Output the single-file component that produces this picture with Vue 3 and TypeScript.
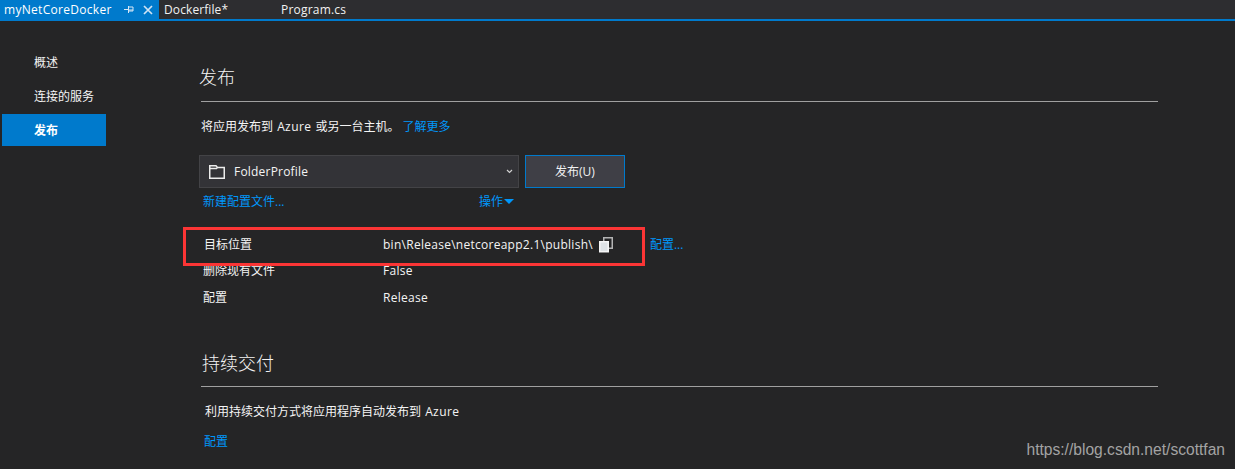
<script setup lang="ts">
const nav = [
  { label: '概述', active: false },
  { label: '连接的服务', active: false },
  { label: '发布', active: true },
]
const rows = [
  { key: '删除现有文件', value: 'False' },
  { key: '配置', value: 'Release' },
]
</script>

<template>
  <div class="page">
    <header class="tabs">
      <div class="tab active">
        <span class="tab-name">myNetCoreDocker</span>
        <svg class="pin" width="10" height="9" viewBox="0 0 10 9"><path d="M0 4.5H4M4.5 1V8M4.5 2H9V6H4.5M4.5 5H9" fill="none" stroke="#d6e6f5" stroke-width="1"/></svg>
        <svg class="close" width="10" height="10" viewBox="0 0 10 10"><path d="M1 1L9 9M9 1L1 9" fill="none" stroke="#d0e3f4" stroke-width="1.7"/></svg>
      </div>
      <div class="tab docker">Dockerfile*</div>
      <div class="tab program">Program.cs</div>
    </header>
    <div class="body">
      <nav class="side">
        <a v-for="n in nav" :key="n.label" class="nav-item" :class="{ on: n.active }">{{ n.label }}</a>
      </nav>
      <main class="main">
        <section class="publish">
          <h2 class="title first">发布</h2>
          <div class="rule"></div>
          <p class="desc">将应用发布到 <span class="lat">Azure</span> 或另一台主机。<a class="link learn">了解更多</a></p>
          <div class="controls">
            <div class="select">
              <svg class="folder" width="16" height="14" viewBox="0 0 16 14"><path d="M0.75 13.25V0.75H7L8.5 2.5H15.25V13.25ZM0.75 3.5H7.5L8.5 2.5" fill="none" stroke="#ececec" stroke-width="1.5"/></svg>
              <span class="select-text">FolderProfile</span>
              <svg class="chev" width="7" height="5" viewBox="0 0 7 5"><path d="M1 1L3.5 3.5L6 1" fill="none" stroke="#d0d0d0" stroke-width="1.2"/></svg>
            </div>
            <button class="btn">发布(U)</button>
          </div>
          <div class="actions">
            <a class="link">新建配置文件...</a>
            <a class="link ops">操作<span class="caret"></span></a>
          </div>
          <div class="props">
            <div class="prop target">
              <span class="k">目标位置</span>
              <span class="v">bin\Release\netcoreapp2.1\publish\</span>
              <svg class="copy" width="14" height="16" viewBox="0 0 14 16"><path d="M4.75 4V0.75H13.25V11.25H10" fill="none" stroke="#b4b4b4" stroke-width="1.5"/><rect x="0.75" y="4.75" width="8.5" height="10" fill="#dfe3e6" stroke="#f6f6f6" stroke-width="1.5"/><path d="M0 15.5H10" stroke="#8a8a8a"/></svg>
              <a class="link cfg">配置...</a>
            </div>
            <div v-for="r in rows" :key="r.key" class="prop">
              <span class="k">{{ r.key }}</span>
              <span class="v">{{ r.value }}</span>
            </div>
            <div class="redbox"></div>
          </div>
        </section>
        <section class="cd">
          <h2 class="title">持续交付</h2>
          <div class="rule"></div>
          <p class="desc cd-desc">利用持续交付方式将应用程序自动发布到 <span class="lat">Azure</span></p>
          <a class="link cd-link">配置</a>
        </section>
      </main>
    </div>
    <div class="mark">https://blog.csdn.net/scottfan</div>
  </div>
</template>

<style>
html, body { margin: 0; background: #252526; }
</style>

<style scoped>
.page {
  position: relative;
  width: 1235px;
  height: 469px;
  overflow: hidden;
  background: #252526;
  color: #f4f4f4;
  font: 12px/16px "Open Sans", "Noto Sans CJK SC", sans-serif;
}
.tabs {
  display: flex;
  height: 19px;
  background: #2d2d30;
  border-bottom: 2px solid #007acc;
  color: #f1f1f1;
}
.tab { display: flex; align-items: center; height: 19px; }
.tab.active { width: 159px; padding-left: 4px; box-sizing: border-box; background: #007acc; color: #fff; }
.tab-name { width: 120px; letter-spacing: 0.3px; }
.close { margin-left: 9px; }
.docker { width: 117px; padding-left: 5px; box-sizing: border-box; letter-spacing: 0.1px; }
.program { padding-left: 5px; letter-spacing: 0.2px; }
.body { display: flex; }
.side {
  width: 104px;
  margin-left: 2px;
  padding-top: 26px;
  display: flex;
  flex-direction: column;
  gap: 2px;
}
.nav-item { height: 32px; line-height: 32px; padding-left: 32px; }
.nav-item.on { background: #007acc; font-weight: 700; color: #fff; height: 32px; margin-top: -1px; line-height: 34px; }
.main { margin-left: 95px; width: 957px; }
.title { margin: 0; font-size: 18px; line-height: 24px; font-weight: 300; }
.first { padding-top: 44px; margin-left: -2px; }
.rule { height: 1px; background: #a0a0a0; margin-top: 12px; }
.desc { margin: 17px 0 0; height: 16px; }
.lat { letter-spacing: 0.4px; margin: 0 1px; }
.link { color: #0097fb; }
.learn { margin-left: 3px; }
.controls { display: flex; gap: 6px; margin-top: 20px; margin-left: -2px; }
.select {
  display: flex;
  align-items: center;
  box-sizing: border-box;
  width: 320px;
  height: 33px;
  background: #333337;
  border: 1px solid #434346;
  padding: 0 5px 0 9px;
}
.folder { margin-right: 9px; }
.select-text { flex: 1; letter-spacing: 0.2px; }
.btn {
  box-sizing: border-box;
  width: 100px;
  height: 33px;
  background: #3f3f46;
  border: 1px solid #007acc;
  color: #f1f1f1;
  font: inherit;
  padding: 0;
}
.actions { display: flex; margin-top: 6px; margin-left: 2px; height: 16px; }
.actions .link:first-child { width: 276px; }
.caret {
  display: inline-block;
  width: 0;
  height: 0;
  margin-left: 1px;
  border: 5px solid transparent;
  border-top: 5px solid #0097fb;
  border-bottom: 0;
  vertical-align: 2px;
}
.props { position: relative; margin-top: 21px; }
.prop { display: flex; align-items: center; height: 27px; }
.prop.target { margin-bottom: -1px; }
.k { width: 180px; padding-left: 2px; }
.target .k { width: 179px; padding-left: 3px; }
.v { letter-spacing: 0.27px; }
.copy { margin-left: 6px; }
.cfg { margin-left: 37px; }
.redbox {
  position: absolute;
  left: -18px;
  top: -4px;
  width: 462px;
  height: 39px;
  box-sizing: border-box;
  border: 3px solid #fb3535;
  pointer-events: none;
}
.cd { margin-top: 40px; }
.cd .title { padding-left: 1px; }
.cd .rule { margin-top: 11px; }
.cd-desc { margin-top: 17px; margin-left: 4px; }
.cd-link { display: block; margin-top: 14px; margin-left: 3px; }
.mark {
  position: absolute;
  right: 10px;
  bottom: 11px;
  color: #a3a3a3;
  font: 15.6px/16px "Liberation Sans", sans-serif;
}
</style>
